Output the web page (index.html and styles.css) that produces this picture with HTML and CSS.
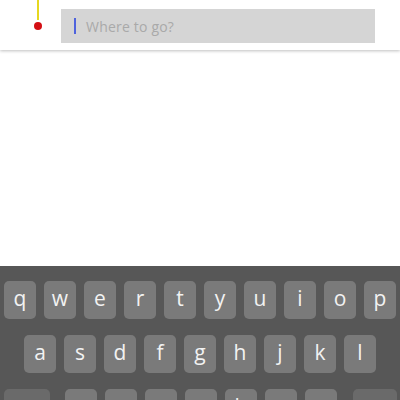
FILE: index.html
```html
<!DOCTYPE html>
<html>
<head>
<meta charset="utf-8">
<link rel="stylesheet" href="styles.css">
</head>
<body>
<div class="screen">
  <header class="topbar">
    <div class="route">
      <span class="route-line"></span>
      <span class="route-dot"></span>
    </div>
    <div class="search">
      <span class="caret"></span>
      <span class="placeholder">Where to go?</span>
    </div>
  </header>
  <main class="content"></main>
  <section class="keyboard">
    <div class="row row1">
      <div class="key">q</div><div class="key">w</div><div class="key">e</div><div class="key">r</div><div class="key">t</div><div class="key">y</div><div class="key">u</div><div class="key">i</div><div class="key">o</div><div class="key">p</div>
    </div>
    <div class="row row2">
      <div class="key">a</div><div class="key">s</div><div class="key">d</div><div class="key">f</div><div class="key">g</div><div class="key">h</div><div class="key">j</div><div class="key">k</div><div class="key">l</div>
    </div>
    <div class="row row3">
      <div class="key key-mod key-shift"></div>
      <div class="letters">
        <div class="key">z</div><div class="key">x</div><div class="key">c</div><div class="key">v</div><div class="key">b</div><div class="key">n</div><div class="key">m</div>
      </div>
      <div class="key key-mod key-back"></div>
    </div>
  </section>
</div>
</body>
</html>
```

FILE: styles.css
```css
html, body {
  margin: 0;
  padding: 0;
  width: 400px;
  height: 400px;
  overflow: hidden;
  background: #ffffff;
  font-family: "Open Sans", "Liberation Sans", sans-serif;
}

.screen {
  display: flex;
  flex-direction: column;
  width: 400px;
  height: 400px;
}

.topbar {
  flex: 0 0 auto;
  height: 50px;
  display: flex;
  align-items: flex-start;
  background: #ffffff;
  box-shadow: 0 1px 3px rgba(0, 0, 0, 0.25);
  position: relative;
  z-index: 1;
}

.route {
  width: 61px;
  height: 50px;
  display: flex;
  flex-direction: column;
  align-items: center;
  padding-left: 15px;
  box-sizing: border-box;
}

.route-line {
  width: 2px;
  height: 20px;
  background: #e6d820;
}

.route-dot {
  width: 8px;
  height: 8px;
  margin-top: 2px;
  border-radius: 50%;
  background: #d40f14;
}

.search {
  margin-top: 9px;
  width: 314px;
  height: 34px;
  background: #d5d5d5;
  display: flex;
  align-items: center;
  padding-left: 13px;
  box-sizing: border-box;
}

.caret {
  width: 2px;
  height: 16px;
  background: #4f63dd;
  margin-right: 10px;
}

.placeholder {
  color: #a9a9a9;
  font-size: 14px;
  letter-spacing: 0.2px;
}

.content {
  flex: 1 1 auto;
}

.keyboard {
  flex: 0 0 auto;
  height: 134px;
  background: #575757;
  padding-top: 15px;
  box-sizing: border-box;
  display: flex;
  flex-direction: column;
  gap: 16px;
}

.row {
  display: flex;
  gap: 8px;
}

.row1 { padding-left: 4px; }
.row2 { padding-left: 24px; }
.row3 { padding-left: 4px; gap: 15px; }

.letters {
  display: flex;
  gap: 8px;
}

.key {
  width: 32px;
  height: 38px;
  flex: 0 0 auto;
  border-radius: 5px;
  background: #7a7a7a;
  color: #f2f2f2;
  font-size: 21px;
  display: flex;
  align-items: center;
  justify-content: center;
  line-height: 1;
  padding-bottom: 3px;
  box-sizing: border-box;
}

.key-mod {
  background: #6a6a6a;
}

.key-shift {
  width: 46px;
}

.key-back {
  width: 44px;
  margin-left: 1px;
}
```
